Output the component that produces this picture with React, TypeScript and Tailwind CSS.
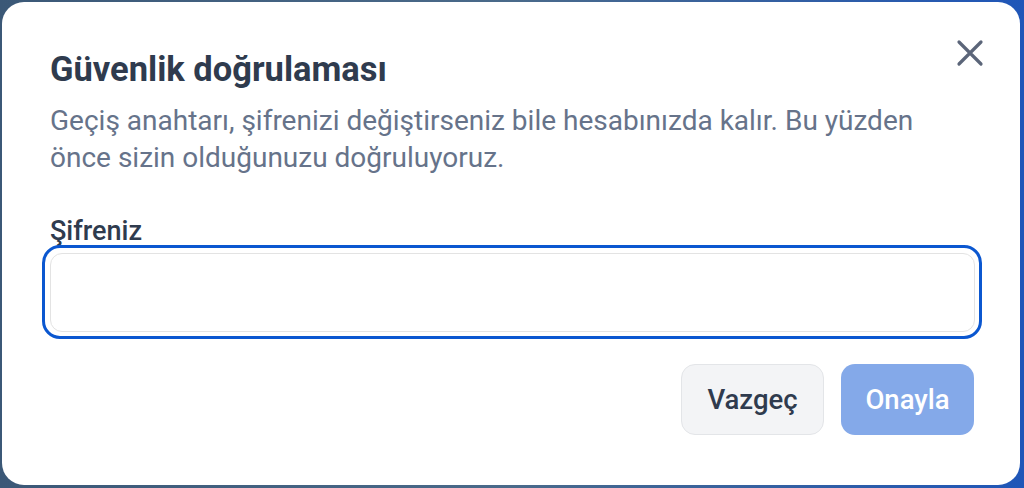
import React from "react";

export default function App() {
  return (
    <div
      className="w-[1024px] h-[488px] overflow-hidden bg-[linear-gradient(90deg,#3b5877_0%,#4a6a8a_50%,#1f56b8_100%)] p-[2px] pb-[3px] pr-[4px]"
      style={{ fontFamily: "Roboto, 'Noto Sans', sans-serif" }}
    >
      <div className="relative h-full w-full rounded-[22px] bg-white pl-[48px] pr-[46px] pt-[47px] flex flex-col">
        <button className="absolute right-[36px] top-[37px] w-[28px] h-[28px] flex items-center justify-center text-[#5b6579]">
          <svg width="28" height="28" viewBox="0 0 28 28" fill="none" stroke="currentColor" strokeWidth="3.2" strokeLinecap="round">
            <path d="M3 3 L25 25 M25 3 L3 25" />
          </svg>
        </button>
        <h2 className="text-[34.5px] leading-[40px] font-bold text-[#2f3b4e]">Güvenlik doğrulaması</h2>
        <p className="mt-[13px] text-[28px] leading-[37px] text-[#66738a] pr-[40px]">
          Geçiş anahtarı, şifrenizi değiştirseniz bile hesabınızda kalır. Bu yüzden önce sizin olduğunuzu doğruluyoruz.
        </p>
        <label className="mt-[41px] text-[27px] leading-[28px] font-medium text-[#2f3b4e]">Şifreniz</label>
        <div className="-mx-[8px] rounded-[18px] border-[3.5px] border-[#0b57d0] p-[4.5px]">
          <input
            type="password"
            className="block w-full h-[79px] rounded-[12px] border-[1.5px] border-[#e3e3e3] bg-white outline-none px-4 text-[22px]"
          />
        </div>
        <div className="mt-[25px] flex justify-end gap-[17px]">
          <button className="h-[71px] w-[143px] rounded-[14px] border-[1.5px] border-[#e3e5e8] bg-[#f3f4f6] text-[27.5px] font-medium text-[#2f3b4e]">
            Vazgeç
          </button>
          <button className="h-[71px] w-[133px] rounded-[14px] bg-[#84a9e9] text-[27.5px] font-medium text-white">
            Onayla
          </button>
        </div>
      </div>
    </div>
  );
}
